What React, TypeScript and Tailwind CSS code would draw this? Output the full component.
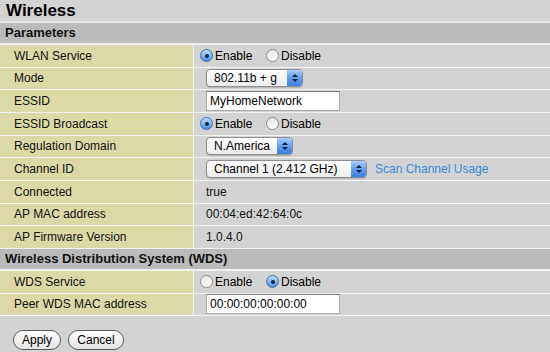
import React from 'react'

const font = { fontFamily: '"Liberation Sans", Arial, sans-serif' }

function Radio({ on }: { on: boolean }) {
  return on ? (
    <span className="inline-flex items-center justify-center w-[13px] h-[13px] rounded-full border border-[#3b6fb0] bg-gradient-to-b from-[#bcdcfb] to-[#4a90e2] mr-[2px]">
      <span className="w-[4px] h-[4px] rounded-full bg-[#10243f]" />
    </span>
  ) : (
    <span className="inline-block w-[13px] h-[13px] rounded-full border border-[#8a8a8a] bg-gradient-to-b from-[#e6e6e6] to-white mr-[2px]" />
  )
}

function RadioPair({ enabled }: { enabled: boolean }) {
  return (
    <div className="flex items-center pl-[6px] text-[12px]">
      <span className="flex items-center w-[66px]"><Radio on={enabled} />Enable</span>
      <span className="flex items-center"><Radio on={!enabled} />Disable</span>
    </div>
  )
}

function Select({ value, w }: { value: string; w: string }) {
  return (
    <div className={`flex items-center h-[18px] ${w} rounded-[4px] border border-[#8e8e8e] bg-gradient-to-b from-white to-[#ececec] shadow-[0_1px_1px_rgba(0,0,0,0.15)]`}>
      <span className="flex-1 pl-[7px] text-[12px] leading-none">{value}</span>
      <span className="w-[15px] h-[16px] rounded-r-[3px] bg-gradient-to-b from-[#a9d0f8] via-[#5e9ff0] to-[#3d80de] flex flex-col items-center justify-center gap-[2px]">
        <svg width="6" height="3" viewBox="0 0 6 3"><path d="M0 3 L3 0 L6 3 Z" fill="#0d1b2e" /></svg>
        <svg width="6" height="3" viewBox="0 0 6 3"><path d="M0 0 L3 3 L6 0 Z" fill="#0d1b2e" /></svg>
      </span>
    </div>
  )
}

function Input({ value }: { value: string }) {
  return (
    <div className="h-[20px] w-[134px] bg-white border border-[#a9a9a9] border-t-[#7e7e7e] flex items-center pl-[3px] text-[12px]">
      {value}
    </div>
  )
}

function Row({ label, children }: { label: string; children: React.ReactNode }) {
  return (
    <div className="flex h-[22.67px] border-b border-[#f2f2f2]">
      <div className="w-[193px] bg-[#dcd9a8] pl-[14px] flex items-center text-[12px] text-[#111]">{label}</div>
      <div className="w-px bg-[#f2f2f2]" />
      <div className="flex-1 bg-[#d3d3d3] flex items-center">{children}</div>
    </div>
  )
}

function Header({ title }: { title: string }) {
  return (
    <div className="h-[22px] bg-[#bbbbbb] border-b-2 border-[#f2f2f2] flex items-center pl-[5px] text-[13px] font-bold text-[#111]">
      {title}
    </div>
  )
}

function Text({ children }: { children: React.ReactNode }) {
  return <span className="pl-[12px] text-[12px] text-[#111]">{children}</span>
}

export default function App() {
  return (
    <div className="w-[550px] h-[352px] bg-[#d3d3d3] overflow-hidden text-black" style={font}>
      <div className="h-[23px] border-b-2 border-[#e9e9e9] flex items-center pl-[6px] text-[17px] font-bold">Wireless</div>
      <Header title="Parameters" />
      <Row label="WLAN Service"><RadioPair enabled /></Row>
      <Row label="Mode"><div className="pl-[12px]"><Select value="802.11b + g" w="w-[97px]" /></div></Row>
      <Row label="ESSID"><div className="pl-[12px]"><Input value="MyHomeNetwork" /></div></Row>
      <Row label="ESSID Broadcast"><RadioPair enabled /></Row>
      <Row label="Regulation Domain"><div className="pl-[12px]"><Select value="N.America" w="w-[87px]" /></div></Row>
      <Row label="Channel ID">
        <div className="pl-[12px] flex items-center">
          <Select value="Channel 1 (2.412 GHz)" w="w-[161px]" />
          <span className="ml-[8px] text-[12px] text-[#3a8ad8]">Scan Channel Usage</span>
        </div>
      </Row>
      <Row label="Connected"><Text>true</Text></Row>
      <Row label="AP MAC address"><Text>00:04:ed:42:64:0c</Text></Row>
      <Row label="AP Firmware Version"><Text>1.0.4.0</Text></Row>
      <Header title="Wireless Distribution System (WDS)" />
      <Row label="WDS Service"><RadioPair enabled={false} /></Row>
      <Row label="Peer WDS MAC address"><div className="pl-[12px]"><Input value="00:00:00:00:00:00" /></div></Row>
      <div className="flex gap-[7px] pl-[13px] pt-[14px]">
        <button className="h-[20px] w-[48px] rounded-full border border-[#5a5a5a] bg-gradient-to-b from-white to-[#e4e4e4] text-[12px] leading-none">Apply</button>
        <button className="h-[20px] w-[56px] rounded-full border border-[#5a5a5a] bg-gradient-to-b from-white to-[#e4e4e4] text-[12px] leading-none">Cancel</button>
      </div>
    </div>
  )
}
